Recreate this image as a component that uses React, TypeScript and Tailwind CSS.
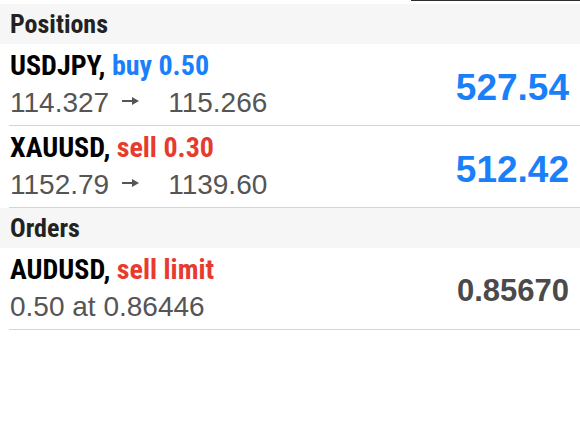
import React from 'react';

type Row = {
  symbol: string;
  action: string;
  actionColor: string;
  from?: string;
  to?: string;
  detail?: string;
  value: string;
  valueClass: string;
};

const positions: Row[] = [
  {
    symbol: 'USDJPY',
    action: 'buy 0.50',
    actionColor: 'text-[#1a80fa]',
    from: '114.327',
    to: '115.266',
    value: '527.54',
    valueClass: 'text-[#1a80fa] text-[37px]',
  },
  {
    symbol: 'XAUUSD',
    action: 'sell 0.30',
    actionColor: 'text-[#e63b2e]',
    from: '1152.79',
    to: '1139.60',
    value: '512.42',
    valueClass: 'text-[#1a80fa] text-[37px]',
  },
];

const orders: Row[] = [
  {
    symbol: 'AUDUSD',
    action: 'sell limit',
    actionColor: 'text-[#e63b2e]',
    detail: '0.50 at 0.86446',
    value: '0.85670',
    valueClass: 'text-[#4a4a4a] text-[31px]',
  },
];

const condensed = "font-['Liberation_Sans_Narrow','Roboto_Condensed','Liberation_Sans',sans-serif]";

const Arrow = () => (
  <svg width="17" height="12" viewBox="0 0 17 12" className="inline-block ml-[13px] mr-[29px] mb-[6px]">
    <line x1="0" y1="6" x2="11" y2="6" stroke="#555" strokeWidth="2" />
    <path d="M10 2 L17 6 L10 10 Z" fill="#555" />
  </svg>
);

const SectionHeader = ({ title }: { title: string }) => (
  <div className={`h-10 bg-[#f6f6f6] pl-[10px] flex items-center ${condensed} font-bold text-[26px] text-[#222]`}>
    {title}
  </div>
);

const TradeRow = ({ row }: { row: Row }) => (
  <div className="ml-[9px] border-b border-[#d4d4d6] flex items-center justify-between pr-[11px] h-[82px]">
    <div className="flex flex-col pl-px">
      <div className={`${condensed} font-bold text-[28px] leading-[34px] text-black`}>
        {row.symbol},{' '}
        <span className={row.actionColor}>{row.action}</span>
      </div>
      <div className="font-['Liberation_Sans',sans-serif] text-[28px] leading-[36px] text-[#555] mt-[2px]">
        {row.detail ? (
          row.detail
        ) : (
          <>
            {row.from}
            <Arrow />
            {row.to}
          </>
        )}
      </div>
    </div>
    <div className={`font-['Liberation_Sans',sans-serif] font-bold pt-[6px] ${row.valueClass}`}>{row.value}</div>
  </div>
);

export default function App() {
  return (
    <div className="w-[580px] h-[423px] bg-white overflow-hidden">
      <div className="h-1 flex justify-end">
        <div className="w-[169px] h-px bg-[#2e2e2e]" />
      </div>
      <SectionHeader title="Positions" />
      {positions.map((r) => (
        <TradeRow key={r.symbol} row={r} />
      ))}
      <SectionHeader title="Orders" />
      {orders.map((r) => (
        <TradeRow key={r.symbol} row={r} />
      ))}
    </div>
  );
}
